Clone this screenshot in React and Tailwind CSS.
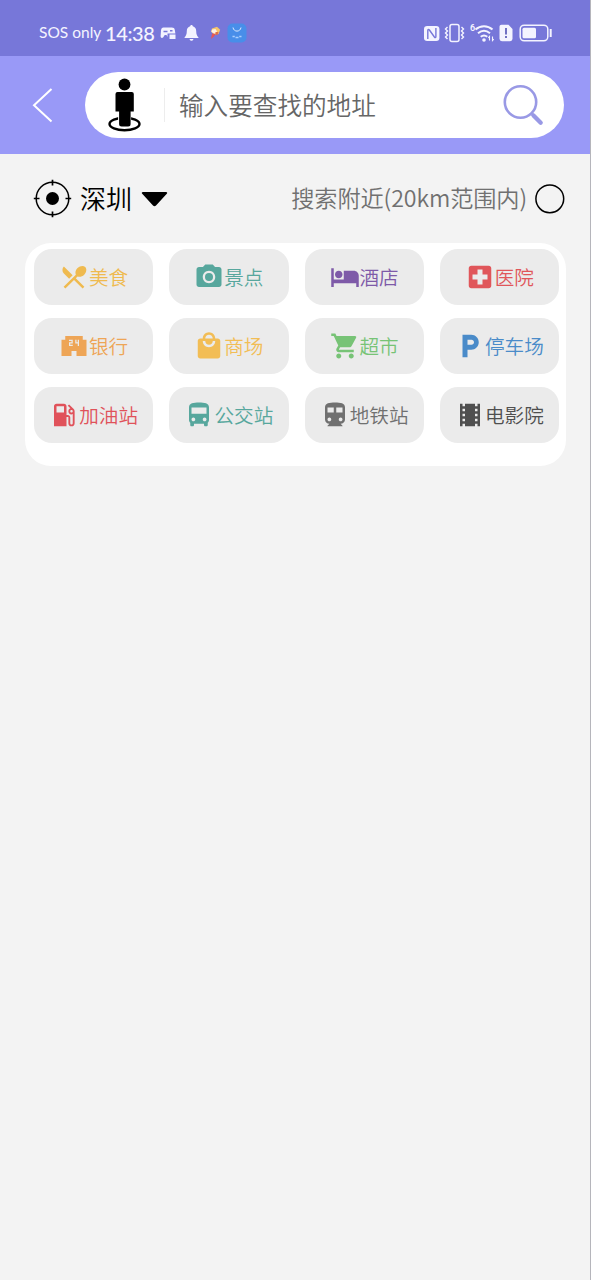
import {
  MdRestaurantMenu, MdCameraAlt, MdHotel, MdLocalHospital,
  MdLocalConvenienceStore, MdLocalMall, MdShoppingCart, MdLocalParking,
  MdLocalGasStation, MdDirectionsBus, MdTheaters
} from 'react-icons/md';

function MetroIcon({ className }) {
  return (
    <svg className={className} viewBox="0 0 24 24" fill="currentColor">
      <path d="M12 2c-4.420 0-8 .5-8 4v9.500C4 17.430 5.570 19 7.500 19L6 20.500v.5h12v-.5L16.500 19c1.930 0 3.500-1.570 3.500-3.500V6c0-3.500-3.580-4-8-4ZM7.500 17c-.83 0-1.500-.67-1.500-1.500S6.670 14 7.500 14s1.500.67 1.500 1.500S8.330 17 7.500 17Zm3.500-7H6V6h5v4Zm2 0V6h5v4h-5Zm3.500 7c-.83 0-1.500-.67-1.500-1.500s.67-1.500 1.500-1.500 1.500.67 1.500 1.500-.67 1.500-1.500 1.500Z" />
    </svg>
  );
}

const categories = [
  { label: '美食', icon: MdRestaurantMenu, color: 'text-[#efba4f]' },
  { label: '景点', icon: MdCameraAlt, color: 'text-[#57a79d]' },
  { label: '酒店', icon: MdHotel, color: 'text-[#7e5aa8]' },
  { label: '医院', icon: MdLocalHospital, color: 'text-[#e0565a]' },
  { label: '银行', icon: MdLocalConvenienceStore, color: 'text-[#eea556]' },
  { label: '商场', icon: MdLocalMall, color: 'text-[#f2bd55]' },
  { label: '超市', icon: MdShoppingCart, color: 'text-[#77c376]' },
  { label: '停车场', icon: MdLocalParking, color: 'text-[#4a8bc9]' },
  { label: '加油站', icon: MdLocalGasStation, color: 'text-[#e0525a]' },
  { label: '公交站', icon: MdDirectionsBus, color: 'text-[#57a79d]' },
  { label: '地铁站', icon: MetroIcon, color: 'text-[#707070]' },
  { label: '电影院', icon: MdTheaters, color: 'text-[#4f4f4f]' }
];

function StatusBar() {
  return (
    <div className="h-14 bg-[#7777d9] pl-[39px] pr-[38px] pt-[10px] flex justify-between text-[#f4f4ff]">
      <div className="h-[46px] flex items-center whitespace-nowrap">
        <span className="w-[66px] font-['Lato'] text-[15.5px]">SOS only</span>
        <span className="w-[55px] font-['Lato'] text-[20px] font-medium tracking-[-0.4px] leading-none">14:38</span>
        {/* Game controller */}
        <svg className="w-4 h-4" viewBox="0 0 16 16">
          <path d="M3.500 2.500h8.300c1.700 0 2.700.8 3 2.400l.6 3.600H7.500V12L6.500 10H4.700l-1.400 2.300C2 13.500.5 12.800.6 11L1 5.500C1.200 3.500 2 2.500 3.500 2.500Z" fill="currentColor" />
          <path d="M3.500 6.500h4M10 5.800h2.500" stroke="#7777d9" strokeWidth="1.500" />
          <path d="M9.500 9.500h6V14h-6z" fill="currentColor" />
        </svg>
        <svg className="w-[15px] h-[18px] ml-2" viewBox="0 0 15 18">
          <path d="M7.500 1c.8 0 1.300.6 1.300 1.300 2.200.6 3.400 2.400 3.400 4.700 0 3.500.8 4.700 2.200 6.300v.7H.6v-.7C2 11.700 2.800 10.500 2.800 7c0-2.300 1.200-4.100 3.400-4.700C6.200 1.600 6.700 1 7.500 1ZM5.500 15h4c-.3 1.200-1 1.800-2 1.800S5.800 16.200 5.500 15Z" fill="currentColor" />
        </svg>
        <svg className="w-3 h-[14px] ml-[10px]" viewBox="0 0 12 14">
          <path d="M3 2.500 8 .8l3.200 3L9.500 8 5 8.500 2 5.500Z" fill="#f6c66b" />
          <path d="M3 3.500 6.500 3 8 5.500l-2 2.200L2.500 6Z" fill="#fff1e4" />
          <path d="M3 7.500 6.500 8 5 10.500 2 13Z" fill="#e55757" />
          <path d="M6.500 6h3l-1 3h-2Z" fill="#df704c" />
        </svg>
        {/* App gallery badge */}
        <svg className="w-5 h-5 ml-[6px]" viewBox="0 0 20 20">
          <rect x=".5" y=".5" width="19" height="19" rx="5" fill="#488ee9" />
          <path d="M6 4.500c.7 4.800 7.300 4.800 8 0" fill="none" stroke="#dceaff" strokeWidth="1" />
          <path d="M5.500 13.500h2.300m.7 1h3m.7-1h2.300" stroke="#a9ceff" strokeWidth="1.300" />
        </svg>
      </div>
      <div className="h-[46px] flex items-center">
        <svg className="w-[17px] h-[17px]" viewBox="0 0 17 17">
          <rect x="0" y="1" width="15.400" height="15" rx="3.200" fill="currentColor" />
          <path d="M3.800 14V5.500c0-1.500 1-1.300 1.600-.5l5 7c.7.9 1.500.7 1.500-.5V3" fill="none" stroke="#7777d9" strokeWidth="1.400" />
        </svg>
        <svg className="w-[21px] h-5 ml-[3px]" viewBox="0 0 21 20" fill="none" stroke="currentColor">
          <rect x="6" y="1.500" width="9" height="17" rx="2" strokeWidth="1.500" />
          <path d="m3.500 4-2 2 2 2-2 2 2 2-2 2 2 2M17.500 4l2 2-2 2 2 2-2 2 2 2-2 2" strokeWidth="1.400" />
        </svg>
        <svg className="w-[26px] h-5 ml-[5px]" viewBox="0 0 26 20" fill="none" stroke="currentColor">
          <text x="0" y="7.500" fill="currentColor" stroke="none" fontFamily="Roboto, sans-serif" fontSize="9" fontWeight="600">6</text>
          <path d="M5.500 6.500C10.500 2 17.500 2 22.500 6.500M8 10.300c4-3.400 8-3.400 12 0M10.700 13.700c2.300-1.800 4.300-1.800 6.600 0" strokeWidth="2" />
          <circle cx="14" cy="17" r="1.800" fill="currentColor" stroke="none" />
          <path d="M19.500 17.500v-4l-1.200 1.300M22.500 13.500v4l1.200-1.300" strokeWidth="1.100" />
        </svg>
        <svg className="w-[14px] h-[18px] ml-[3px]" viewBox="0 0 14 18">
          <path d="M2.500.8h7L13.500 5v9.800a2.400 2.400 0 0 1-2.400 2.400H2.900A2.400 2.400 0 0 1 .5 14.800v-12C.5 1.600 1.300.8 2.500.8Z" fill="currentColor" />
          <path d="M7 4v6.500M7 12v2" stroke="#6464bd" strokeWidth="1.800" />
        </svg>
        <svg className="w-[34px] h-[18px] ml-[6px] -mr-px" viewBox="0 0 34 18">
          <rect x="1.200" y="1.200" width="27.600" height="15.600" rx="4" fill="none" stroke="currentColor" strokeWidth="1.500" />
          <rect x="3.500" y="3.700" width="13.500" height="10.600" rx="1.500" fill="currentColor" />
          <path d="M31.700 5v8" stroke="currentColor" strokeWidth="2" />
        </svg>
      </div>
    </div>
  );
}

function SearchHeader() {
  return (
    <header className="h-[98px] bg-[#9999f7] flex items-center pl-8 pr-[26px]">
      <svg className="w-[21px] h-9 shrink-0" viewBox="0 0 21 36">
        <path d="M19.500 2 2 18.200 19.500 34.500" fill="none" stroke="white" strokeWidth="2" />
      </svg>
      <div className="ml-8 h-[66px] flex-1 rounded-full bg-white flex items-center">
        {/* Street view figure */}
        <svg className="w-[34px] h-[54px] ml-[23px] shrink-0" viewBox="0 0 34 54">
          <ellipse cx="16.500" cy="46" rx="15" ry="6.200" fill="none" stroke="black" strokeWidth="2.400" />
          <path d="M10.100 38h13v10h-13z" fill="white" />
          <circle cx="16.500" cy="6.500" r="5.900" />
          <path d="M9.500 14h14.300a2 2 0 0 1 2 2v17.500h-3.200V46a2.500 2.500 0 0 1-2.500 2.500h-6.500A2.500 2.500 0 0 1 11.100 46V33.500H7.500V16a2 2 0 0 1 2-2Z" />
        </svg>
        <div className="w-px h-[34px] ml-[22px] bg-[#ededed]" />
        <span className="ml-[14px] -mt-[2px] flex-1 text-[24.6px] font-[350] leading-none text-[#666]">输入要查找的地址</span>
        <svg className="w-[42px] h-[42px] mr-5 shrink-0" viewBox="0 0 42 42" fill="none" stroke="#9999e5">
          <circle cx="18.500" cy="18" r="15.700" strokeWidth="2.600" />
          <path d="m30 30 2 2" strokeWidth="3" />
          <path d="m31.500 31.500 7.200 7.300" strokeWidth="4.300" strokeLinecap="round" />
        </svg>
      </div>
    </header>
  );
}

export default function App() {
  return (
    <div className="w-full h-[1280px] bg-[#f3f3f3] border-r border-[#b5b5bb] font-['Noto_Sans_CJK_SC',sans-serif] overflow-hidden">
      <StatusBar />
      <SearchHeader />

      {/* Location */}
      <div className="h-[89px] pl-[33px] pr-[25px] flex items-center justify-between">
        <div className="flex items-center">
          <svg className="w-[39px] h-[39px]" viewBox="0 0 39 39" fill="none" stroke="black">
            <circle cx="19.500" cy="19.500" r="16.300" strokeWidth="1.500" />
            <circle cx="19.500" cy="19.500" r="6.500" fill="black" stroke="none" />
            <path d="M19.500 .8v5.700M19.500 32.500v5.700M.8 19.500h5.700M32.500 19.500h5.700" strokeWidth="1.700" />
          </svg>
          <span className="ml-[8px] -mt-[2px] text-[26px] font-[350] leading-none text-black">深圳</span>
          <svg className="w-[27px] h-4 ml-[9px]" viewBox="0 0 27 16">
            <path d="M2 1h23c1.200 0 1.600 1 .8 1.800L15 14.500c-.9.9-2.100.9-3 0L1.200 2.800C.4 2 .8 1 2 1Z" />
          </svg>
        </div>
        <div className="flex items-center">
          <span className="-mt-px text-[23.2px] tracking-[-0.1px] font-[350] leading-none text-[#707070] whitespace-nowrap">搜索附近(20km范围内)</span>
          <svg className="w-[30px] h-[30px] ml-2" viewBox="0 0 30 30">
            <circle cx="14.800" cy="14.800" r="13.900" fill="none" stroke="black" strokeWidth="1.500" />
          </svg>
        </div>
      </div>

      {/* Categories */}
      <div className="ml-[25px] mr-6 h-[223px] rounded-[26px] bg-white pt-[6px] pl-[9px] pr-[7px]">
        <div className="grid grid-cols-4 gap-x-4 gap-y-[13px]">
          {categories.map(({ label, icon: Icon, color }) => (
            <div key={label} className={`h-14 rounded-[18px] bg-[#ebebeb] flex items-center justify-center ${color}`}>
              <Icon className="w-[30px] h-[30px] shrink-0" />
              <span className="text-[19.6px] font-[350] leading-none whitespace-nowrap">{label}</span>
            </div>
          ))}
        </div>
      </div>
    </div>
  );
}
